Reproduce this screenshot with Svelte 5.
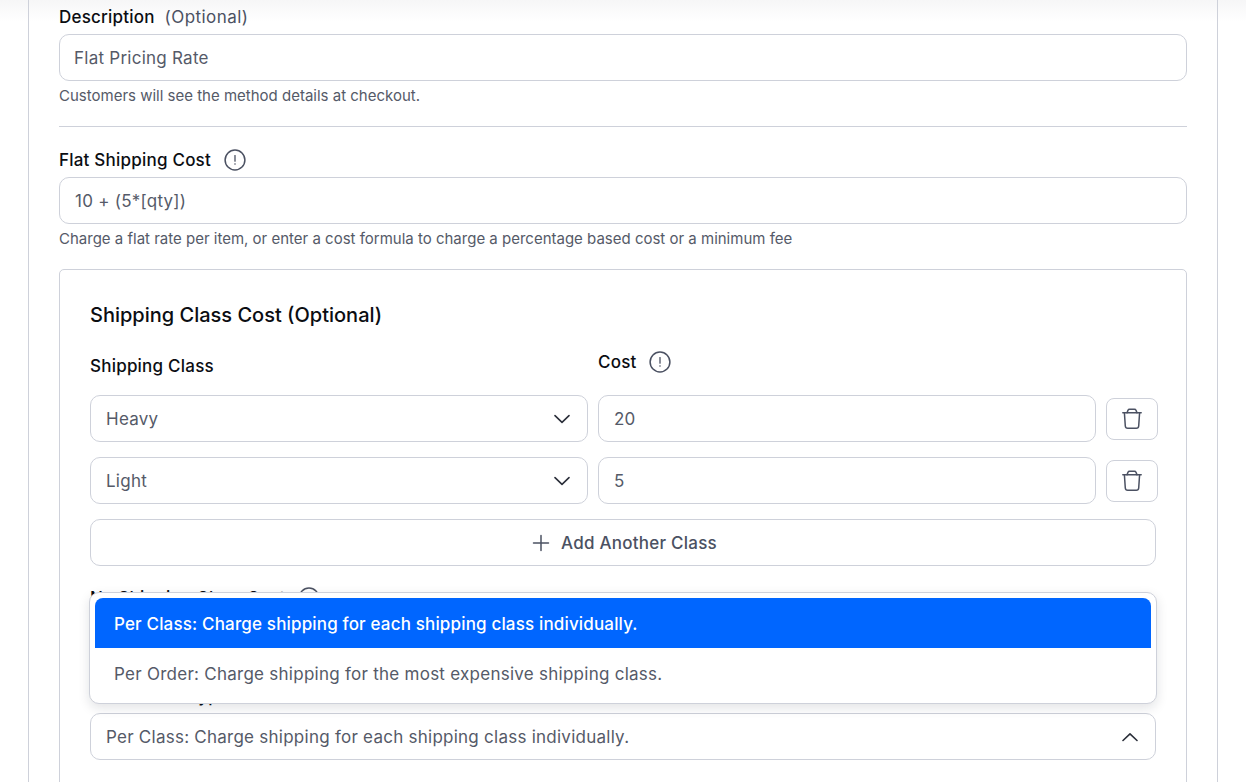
<script>
  const rows = [
    { cls: "Heavy", cost: "20" },
    { cls: "Light", cost: "5" }
  ];
  const options = [
    "Per Class: Charge shipping for each shipping class individually.",
    "Per Order: Charge shipping for the most expensive shipping class."
  ];
</script>

{#snippet info()}
  <svg class="info" width="22" height="22" viewBox="0 0 22 22" fill="none">
    <circle cx="11" cy="11" r="9.9" stroke="#4b5162" stroke-width="1.5" />
    <path d="M11 6.6v5.6" stroke="#4b5162" stroke-width="1.3" stroke-linecap="round" />
    <circle cx="11" cy="15" r="0.8" fill="#4b5162" />
  </svg>
{/snippet}

{#snippet chevron(up)}
  <svg class="chev" width="16" height="16" viewBox="0 0 16 16" fill="none">
    <path d={up ? "M1 11.5 8 4.8l7 6.7" : "M1 4.6 8 11.3l7-6.7"} stroke="#2b2f3a" stroke-width="1.6" stroke-linecap="round" stroke-linejoin="round" />
  </svg>
{/snippet}

{#snippet trash()}
  <svg width="20" height="22" viewBox="0 0 20 22" fill="none" stroke="#4b5162" stroke-width="1.5" stroke-linecap="round" stroke-linejoin="round">
    <path d="M.8 4.8h18.4" />
    <path d="M5 4.8l1-2.6c.3-.7.9-1 1.5-1h5c.6 0 1.2.3 1.5 1l1 2.6" />
    <path d="M2.4 4.8l.9 13.2c.1 1.4 1 2.3 2.4 2.3h8.6c1.4 0 2.3-.9 2.4-2.3l.9-13.2" />
  </svg>
{/snippet}

<div class="page">
  <div class="shade"></div>
  <div class="panel">
    <div class="field">
      <div class="label">Description <span class="opt">(Optional)</span></div>
      <div class="input top">Flat Pricing Rate</div>
      <p class="help">Customers will see the method details at checkout.</p>
    </div>

    <hr />

    <div class="field">
      <div class="label">Flat Shipping Cost {@render info()}</div>
      <div class="input">10 + (5*[qty])</div>
      <p class="help">Charge a flat rate per item, or enter a cost formula to charge a percentage based cost or a minimum fee</p>
    </div>

    <section class="card">
      <h3>Shipping Class Cost (Optional)</h3>
      <div class="heads">
        <div class="label cls-head">Shipping Class</div>
        <div class="label cost-head">Cost {@render info()}</div>
      </div>

      {#each rows as row}
        <div class="row">
          <div class="input select">{row.cls} {@render chevron(false)}</div>
          <div class="input">{row.cost}</div>
          <button class="del" aria-label="Delete">{@render trash()}</button>
        </div>
      {/each}

      <button class="add">
        <svg width="18" height="18" viewBox="0 0 18 18" fill="none">
          <path d="M9 1.5v15M1.5 9h15" stroke="#4b5162" stroke-width="1.5" stroke-linecap="round" />
        </svg>
        Add Another Class
      </button>

      <div class="calc">
        <div class="label">No Shipping Class Cost {@render info()}</div>
        <div class="input"></div>
        <div class="label type">Calculation Type</div>
        <div class="select-wrap">
          <ul class="menu">
            {#each options as o, i}
              <li class:active={i === 0}>{o}</li>
            {/each}
          </ul>
          <div class="input select">{options[0]} {@render chevron(true)}</div>
        </div>
      </div>
    </section>
  </div>
</div>

<style>
  :global(body) {
    margin: 0;
    background: #fff;
    font-family: Inter, "Liberation Sans", sans-serif;
    overflow: hidden;
  }

  .page {
    position: relative;
    height: 782px;
    overflow: hidden;
  }

  .shade {
    position: absolute;
    top: 0;
    left: 0;
    right: 0;
    height: 22px;
    background: linear-gradient(#f6f6f7, #fff);
  }

  .panel {
    position: relative;
    box-sizing: border-box;
    width: 1190px;
    margin-left: 28px;
    padding: 6px 30px 0;
    border-left: 1px solid #ced1da;
    border-right: 1px solid #ced1da;
  }

  .label {
    display: flex;
    align-items: center;
    height: 22px;
    font-size: 17px;
    letter-spacing: 0.22px;
    font-weight: 500;
    color: #0b0d12;
    white-space: pre;
  }

  .opt {
    margin-left: 5px;
    font-weight: 400;
    letter-spacing: 0.45px;
    color: #4b5162;
  }

  .info {
    margin-left: 8px;
  }

  .input {
    box-sizing: border-box;
    display: flex;
    align-items: center;
    height: 47px;
    margin-top: 6px;
    padding: 0 15px;
    border: 1px solid #ced1da;
    border-radius: 10px;
    background: #fff;
    font-size: 17px;
    letter-spacing: 0.25px;
    color: #555a68;
  }

  .input.top {
    padding-left: 14px;
  }

  .help {
    margin: 4px 0 0;
    font-size: 15px;
    line-height: 22px;
    color: #555a68;
  }

  hr {
    height: 1px;
    margin: 19px 0 22px;
    border: 0;
    background: #ced1da;
  }

  .card {
    box-sizing: border-box;
    height: 560px;
    margin-top: 19px;
    padding: 30px;
    border: 1px solid #ced1da;
    border-radius: 5px;
  }

  h3 {
    margin: 0;
    font-size: 20px;
    line-height: 30px;
    font-weight: 500;
    color: #0b0d12;
  }

  .heads {
    display: grid;
    grid-template-columns: 498px 1fr;
    column-gap: 10px;
    margin-top: 21px;
    height: 29px;
  }

  .cls-head {
    margin-top: 4px;
  }

  .row {
    display: grid;
    grid-template-columns: 498px 498px 52px;
    column-gap: 10px;
    align-items: center;
    margin-top: 15px;
  }

  .row .input {
    margin-top: 0;
  }

  .select {
    justify-content: space-between;
  }

  .chev {
    margin-right: 2px;
  }

  .del {
    display: flex;
    align-items: center;
    justify-content: center;
    height: 42px;
    padding: 0;
    background: #fff;
    border: 1px solid #ced1da;
    border-radius: 8px;
  }

  .add {
    display: flex;
    align-items: center;
    justify-content: center;
    gap: 11px;
    box-sizing: border-box;
    width: 1066px;
    height: 47px;
    margin-top: 15px;
    padding: 0 0 0 3px;
    background: #fff;
    border: 1px solid #ced1da;
    border-radius: 10px;
    font: 500 17px Inter, "Liberation Sans", sans-serif;
    letter-spacing: 0.24px;
    color: #4b5162;
  }

  .calc {
    width: 1066px;
    margin-top: 21px;
  }

  .type {
    margin-top: 23px;
  }

  .select-wrap {
    position: relative;
  }

  .menu {
    position: absolute;
    left: -1px;
    right: -1px;
    bottom: 56px;
    box-sizing: border-box;
    margin: 0;
    padding: 5px;
    height: 112px;
    list-style: none;
    background: #fff;
    border: 1px solid #ced1da;
    border-radius: 10px;
    box-shadow: 0 4px 12px rgba(20, 24, 40, 0.12);
  }

  .menu li {
    box-sizing: border-box;
    display: flex;
    align-items: center;
    height: 50px;
    padding: 2px 0 0 19px;
    font-size: 17px;
    letter-spacing: 0.26px;
    color: #555a68;
  }

  .menu li.active {
    background: #0066ff;
    color: #fff;
    font-weight: 500;
    letter-spacing: 0.16px;
    border-radius: 8px 8px 0 0;
  }
</style>
